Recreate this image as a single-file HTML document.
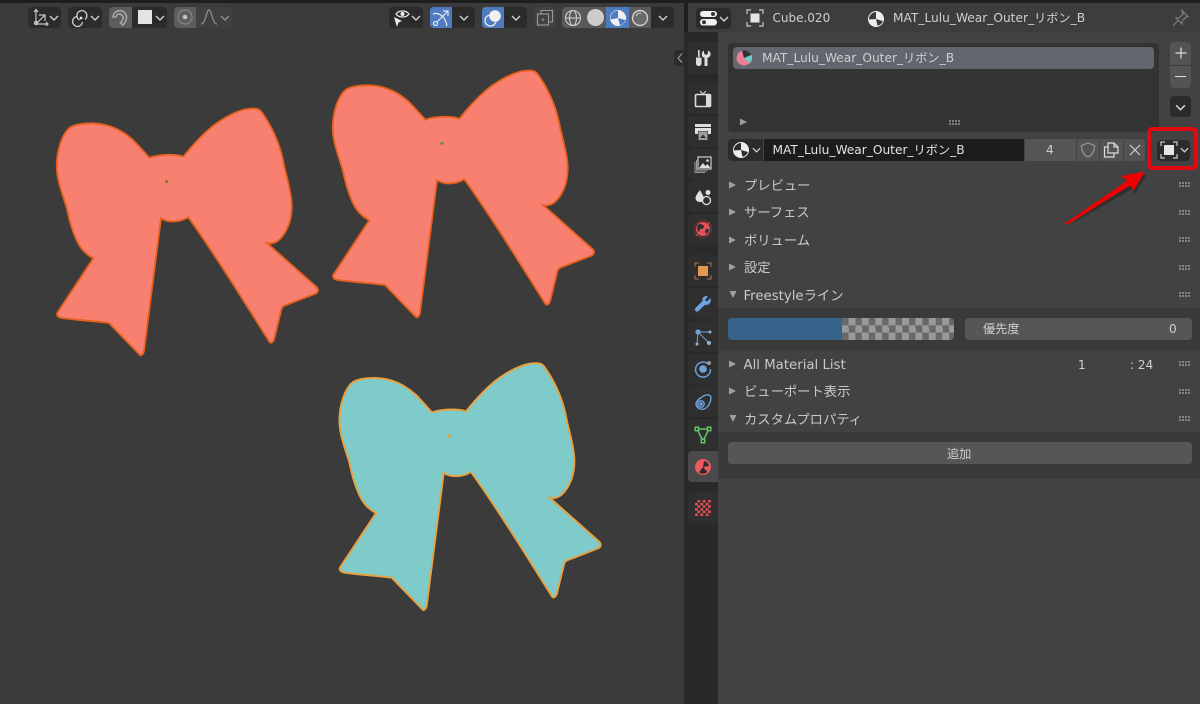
<!DOCTYPE html>
<html lang="ja"><head><meta charset="utf-8"><title>Blender</title>
<style>
html,body{margin:0;padding:0;background:#3b3b3b}
#r{position:relative;width:1200px;height:704px;overflow:hidden;background:#3b3b3b;font-family:"DejaVu Sans","Noto Sans CJK JP",sans-serif;font-size:12.2px;color:#cfcfcf;filter:blur(.35px)}
#r div,#r span,#r svg{position:absolute}
.t{white-space:nowrap;line-height:16px;height:16px}
.h{font-size:13.3px;color:#c9c9c9}
.b{border-radius:4px}
.d{background:#2b2b2b}
.g{width:12px;height:6px;background-image:radial-gradient(circle at 1px 1px,#a5a5a5 .75px,transparent 1px);background-size:3px 3px}
.tab{left:688px;width:30px;background:#2f2f2f;border-radius:4px 0 0 4px}
</style></head><body><div id="r">
<svg width="0" height="0" style="left:0;top:0"><defs>
<symbol id="c" viewBox="0 0 10 6"><path d="M1 1l4 4 4-4" fill="none" stroke="#d0d0d0" stroke-width="1.4"/></symbol>
<path id="bow" d="M149.300 157.700C158 154.500 175 153.500 183.300 156.700C192 146 204 132 217 123C230 114 243 108.500 253 108.500C258 108.500 260 109.500 263 114C270 124 279 141 283 160C285 173 291 188 291.700 205C292 220 287 232 280 239C276 243 271 244 267.300 243.300L316.500 287C318.500 289 318.500 292 316 293.500L286 305C283 306 282 307 281.500 309L274 339.500C273 342.500 270.500 343.500 269.500 342C245 303 212 250 188.300 217.300C184 220 179 221.500 173 221.500C168 221.500 164 220 161 218.300L144 351C143.500 354 141.500 356 140 355L109 323C95 321 75 320 62 318C58 317.500 56 315 57.500 312.500L93.300 258.300C85 254 80 248 76.500 240C71 228 69 218 66.700 208C63 195 56.500 180 56.700 165C57 150 62 134 70 127.500C76 124 84 123.300 92 123.300C108 123.500 122 130 133 140C139 146 144 152 149.300 157.700Z"/>
</defs></svg>

<!-- viewport -->
<div style="left:0;top:0;width:1200px;height:3px;background:#1e1e1e"></div>
<div style="left:684px;top:0;width:4px;height:704px;background:#1f1f1f"></div>

<svg width="684" height="704" viewBox="0 0 684 704" style="left:0;top:0">
<use href="#bow" fill="#f78070" stroke="#e8601c" stroke-width="1.800"/>
<use href="#bow" transform="translate(276 -38)" fill="#f78070" stroke="#e8601c" stroke-width="1.800"/>
<use href="#bow" transform="translate(282.700 254.700)" fill="#7fcbc9" stroke="#e9a040" stroke-width="1.900"/>
<circle cx="166.500" cy="181.500" r="1.600" fill="#8a7a20"/>
<circle cx="442" cy="143.300" r="1.600" fill="#6f8a40"/>
<circle cx="449" cy="436" r="1.800" fill="#e9a040"/>
</svg>

<!-- viewport toolbar left -->
<div class="b d" style="left:28px;top:7px;width:33px;height:21px"></div>
<svg width="18" height="18" viewBox="0 0 18 18" style="left:31px;top:8px" fill="none" stroke="#c8c8c8" stroke-width="1.200"><path d="M5 16V2M3 4l2-2.500L7 4M5 16h12M15 14l2 2-2 2M5 16L14 7M8 7h6v6"/><circle cx="5" cy="15" r="1.600"/></svg>
<svg width="10" height="6" style="left:49px;top:15px"><use href="#c"/></svg>
<div class="b d" style="left:68px;top:7px;width:34px;height:21px"></div>
<svg width="20" height="20" viewBox="0 0 20 20" style="left:71px;top:8px" fill="none" stroke="#cfcfcf" stroke-width="1.300"><path d="M6 8.500a5 5 0 1 0 5.500 5.500"/><path d="M8.500 12a5 5 0 1 1 5.500-.5"/><circle cx="10" cy="10" r="1.400" fill="#eee" stroke="none"/></svg>
<svg width="10" height="6" style="left:90px;top:15px"><use href="#c"/></svg>
<div style="left:109px;top:7px;width:23px;height:21px;background:#5d5d5d;border-radius:4px 0 0 4px"></div>
<svg width="20" height="20" viewBox="0 0 20 20" style="left:110px;top:8px" fill="none" stroke="#a8a8a8" stroke-width="1.600"><path d="M3 9C3 3 11 .5 15 5C18 9 16 14 13 17L10.500 15C13 12 14 9 12 7C10 5 6.500 6 6 9Z"/></svg>
<div class="d" style="left:132px;top:7px;width:35px;height:21px;border-radius:0 4px 4px 0"></div>
<div style="left:138px;top:10px;width:14px;height:14px;background:#e4e4e4"></div>
<svg width="10" height="6" style="left:155px;top:15px"><use href="#c"/></svg>
<div style="left:174px;top:7px;width:22px;height:21px;background:#5d5d5d;border-radius:4px 0 0 4px"></div>
<svg width="18" height="18" viewBox="0 0 18 18" style="left:176px;top:8px"><circle cx="9" cy="9" r="7" fill="none" stroke="#858585" stroke-width="1.200"/><circle cx="9" cy="9" r="2.300" fill="#c4c4c4"/></svg>
<div style="left:196px;top:7px;width:36px;height:21px;background:#404040;border-radius:0 4px 4px 0"></div>
<svg width="18" height="18" viewBox="0 0 18 18" style="left:200px;top:8px" fill="none" stroke="#8f8f8f" stroke-width="1.200"><path d="M1 16C6 16 6 2 9 2s3 14 8 14"/></svg>
<svg width="10" height="6" style="left:220px;top:15px"><use href="#c" opacity=".55"/></svg>

<!-- viewport toolbar right -->
<div class="b d" style="left:389px;top:7px;width:34px;height:21px"></div>
<svg width="20" height="20" viewBox="0 0 20 20" style="left:392px;top:8px"><path d="M4 6C7 2 14 2 17 6C14 10 7 10 4 6Z" fill="none" stroke="#eee" stroke-width="1.200"/><circle cx="10.500" cy="6" r="2" fill="#eee"/><path d="M2 9l8 4-3.500 1.500L5 19Z" fill="#eee"/></svg>
<svg width="10" height="6" style="left:411px;top:15px"><use href="#c"/></svg>
<div style="left:430px;top:7px;width:22px;height:21px;background:#4f7cc0;border-radius:4px 0 0 4px"></div>
<svg width="20" height="20" viewBox="0 0 20 20" style="left:431px;top:8px" fill="none" stroke="#e8e8e8" stroke-width="1.200"><circle cx="4.500" cy="15.500" r="2"/><path d="M6 14L17 3M12 3h5v5M2 6c6-2 12 2 14 12"/></svg>
<div class="d" style="left:452px;top:7px;width:23px;height:21px;border-radius:0 4px 4px 0"></div>
<svg width="10" height="6" style="left:459px;top:15px"><use href="#c"/></svg>
<div style="left:482px;top:7px;width:22px;height:21px;background:#4f7cc0;border-radius:4px 0 0 4px"></div>
<svg width="20" height="20" viewBox="0 0 20 20" style="left:483px;top:8px"><circle cx="7.500" cy="12.500" r="5.500" fill="none" stroke="#e8e8e8" stroke-width="1.300"/><circle cx="12" cy="8" r="5.800" fill="#f0f0f0"/></svg>
<div class="d" style="left:504px;top:7px;width:23px;height:21px;border-radius:0 4px 4px 0"></div>
<svg width="10" height="6" style="left:511px;top:15px"><use href="#c"/></svg>
<div class="b" style="left:535px;top:7px;width:21px;height:21px;background:#414141"></div>
<svg width="18" height="18" viewBox="0 0 18 18" style="left:536px;top:9px" fill="none" stroke="#9a9a9a" stroke-width="1.100"><rect x="1.500" y="5" width="11" height="11"/><path d="M5 5V1.500h11.500V13H12.500"/><path d="M7 9v3M5.500 11h3" stroke-width=".8"/></svg>
<div style="left:562px;top:7px;width:22px;height:21px;background:#5a5a5a;border-radius:4px 0 0 4px"></div>
<svg width="18" height="18" viewBox="0 0 18 18" style="left:564px;top:9px" fill="none" stroke="#cfcfcf" stroke-width="1.100"><circle cx="9" cy="9" r="7.500"/><ellipse cx="9" cy="9" rx="3.500" ry="7.500"/><path d="M1.500 9h15"/></svg>
<div style="left:584px;top:7px;width:22px;height:21px;background:#5a5a5a"></div>
<div style="left:587px;top:9px;width:17px;height:17px;border-radius:50%;background:#cdcdcd"></div>
<div style="left:606px;top:7px;width:23px;height:21px;background:#4f7cc0"></div>
<svg width="18" height="18" viewBox="0 0 18 18" style="left:609px;top:9px"><circle cx="9" cy="9" r="8" fill="#f0f0f0"/><path d="M9 1.500A7.500 7.500 0 0 0 1.700 10.500L9 9Z" fill="#4f7cc0"/><path d="M9 9L16.300 11A7.500 7.500 0 0 1 11 16.300Z" fill="#4f7cc0"/></svg>
<div style="left:629px;top:7px;width:22px;height:21px;background:#5a5a5a"></div>
<svg width="18" height="18" viewBox="0 0 18 18" style="left:631px;top:9px"><circle cx="9" cy="9" r="7.500" fill="#6a6a6a" stroke="#d0d0d0" stroke-width="1.400"/><path d="M5 7c1-2 3-3 5-3" fill="none" stroke="#d0d0d0"/></svg>
<div class="d" style="left:651px;top:7px;width:23px;height:21px;border-radius:0 4px 4px 0"></div>
<svg width="10" height="6" style="left:658px;top:15px"><use href="#c"/></svg>

<div style="left:674px;top:50px;width:10px;height:16px;background:#2c2c2c;border-radius:3px 0 0 3px"></div>
<svg width="6" height="10" viewBox="0 0 6 10" style="left:677px;top:53px" fill="none" stroke="#a8a8a8" stroke-width="1"><path d="M5 .5L1 5l4 4.500"/></svg>

<!-- properties editor -->
<div style="left:688px;top:3px;width:512px;height:701px;background:#424242"></div>
<div style="left:688px;top:3px;width:512px;height:29px;background:#3d3d3d"></div>
<div style="left:684px;top:32px;width:34px;height:672px;background:#292929"></div>

<!-- header -->
<div class="b d" style="left:696px;top:8px;width:35px;height:21px"></div>
<svg width="20" height="16" viewBox="0 0 20 16" style="left:699px;top:10px"><rect x="1" y="1" width="17" height="6" rx="3" fill="#f0f0f0"/><circle cx="14" cy="4" r="2" fill="#333"/><rect x="1" y="9" width="17" height="6.500" rx="3.200" fill="#f0f0f0"/><circle cx="5" cy="12.200" r="2" fill="#333"/></svg>
<svg width="10" height="6" style="left:719px;top:16px"><use href="#c"/></svg>
<svg width="18" height="18" viewBox="0 0 18 18" style="left:746px;top:9px" fill="none" stroke="#c8c8c8" stroke-width="1.200"><path d="M1 5V1h4M13 1h4v4M17 13v4h-4M5 17H1v-4"/><rect x="4.500" y="4.500" width="9" height="9" fill="#e6e6e6" stroke="none"/></svg>
<span class="t" style="left:772.500px;top:10px;font-size:12px">Cube.020</span>
<svg width="18" height="18" viewBox="0 0 18 18" style="left:867px;top:9.500px"><circle cx="9" cy="9" r="8" fill="#eee"/><path d="M9 2A7 7 0 0 0 2 9.500L9 9Z" fill="#3d3d3d"/><path d="M9 9L15.800 11A7 7 0 0 1 10.500 15.800Z" fill="#3d3d3d"/></svg>
<span class="t" style="left:893px;top:10px">MAT_Lulu_Wear_Outer_リボン_B</span>
<svg width="18" height="18" viewBox="0 0 18 18" style="left:1171.500px;top:9px" fill="none" stroke="#7a7a7a" stroke-width="1.300"><path d="M10 1.500l6 6-2 .5-3.500 3.500-.5 3.500-6-6 3.500-.5L11 5ZM6 11.500L1 17"/></svg>

<!-- tabs -->
<div class="tab" style="top:42px;height:32px"></div>
<div class="tab" style="top:83px;height:31px"></div>
<div class="tab" style="top:116px;height:31px"></div>
<div class="tab" style="top:149px;height:31px"></div>
<div class="tab" style="top:181px;height:31px"></div>
<div class="tab" style="top:214px;height:31px"></div>
<div class="tab" style="top:255px;height:31px"></div>
<div class="tab" style="top:288px;height:31px"></div>
<div class="tab" style="top:321px;height:31px"></div>
<div class="tab" style="top:354px;height:31px"></div>
<div class="tab" style="top:386px;height:31px"></div>
<div class="tab" style="top:419px;height:31px"></div>
<div class="tab" style="top:451px;height:31px;background:#4a4a4a"></div>
<div class="tab" style="top:492px;height:31px"></div>

<svg width="18" height="18" viewBox="0 0 18 18" style="left:694px;top:49px"><path d="M4 1h1.600v7H4ZM2 8.500h5.500V14c0 2-1 3-2.700 3S2 16 2 14Z" fill="#dcdcdc"/><path d="M10 1.500v3l2 1.500 2-1.500v-3c2 1 3 2.500 2.500 4.500-.3 1.500-1.500 2.500-3 2.800V17h-3V8.800C9 8.500 8 7.500 7.800 6c-.3-2 .5-3.500 2.200-4.500Z" fill="#dcdcdc"/></svg>
<svg width="18" height="18" viewBox="0 0 18 18" style="left:694px;top:90px"><path d="M6 1l3 3 3-3" fill="none" stroke="#ddd"/><rect x="1.500" y="4.500" width="15" height="12" rx="1" fill="none" stroke="#ddd" stroke-width="1.600"/><rect x="12" y="5" width="4" height="11" fill="#ddd"/><rect x="3" y="6" width="8" height="9" fill="#2e2e2e"/></svg>
<svg width="18" height="18" viewBox="0 0 18 18" style="left:694px;top:123px"><rect x="1" y="1" width="16" height="3" fill="#ddd"/><path d="M1 5h16v6h-3V8H4v3H1Z" fill="#ddd"/><rect x="4.500" y="8.500" width="9" height="8.500" fill="#9e9e9e"/><path d="M6 15l3-3.500 3 3.500Z" fill="#333"/></svg>
<svg width="18" height="18" viewBox="0 0 18 18" style="left:694px;top:156px"><rect x="4" y="1" width="13" height="12" fill="none" stroke="#ccc" stroke-width="1.200"/><path d="M5 12l4-5 2.500 3 2-2 3 4Z" fill="#ddd"/><circle cx="13.500" cy="4.500" r="1.300" fill="#ddd"/><path d="M2.500 4v11h11M1 6v10.500h10" fill="none" stroke="#999"/></svg>
<svg width="18" height="18" viewBox="0 0 18 18" style="left:694px;top:188px"><path d="M6 2l4.500 8.500C10 13 8 14 6 14c-2.500 0-4.500-1.500-4.500-4C1.500 8 4 4.500 6 2Z" fill="#e0e0e0"/><circle cx="14" cy="4.500" r="2.500" fill="#e0e0e0"/><circle cx="12.500" cy="12.500" r="4" fill="#2e2e2e" stroke="#e0e0e0" stroke-width="1.300"/></svg>
<svg width="20" height="20" viewBox="0 0 20 20" style="left:693px;top:219px"><circle cx="10" cy="10" r="7" fill="#e2515a"/><path d="M5 6c3-2 5 0 6 1s-1 3-3 3-2 2-1 4c-2-1-4-5-2-8ZM13 10l3 0c0 2-1 4-3 5-1-2-1-3 0-5Z" fill="#2e2e2e"/><path d="M3 17L17 3" stroke="#e2515a" stroke-width="1" fill="none"/><circle cx="10" cy="10" r="8.500" fill="none" stroke="#a33" stroke-width=".6"/></svg>
<svg width="18" height="18" viewBox="0 0 18 18" style="left:694px;top:262px" fill="none" stroke="#a8764a" stroke-width="1"><path d="M1 5V1h4M13 1h4v4M17 13v4h-4M5 17H1v-4"/><rect x="4" y="4" width="10" height="10" fill="#e39a50" stroke="none"/></svg>
<svg width="18" height="18" viewBox="0 0 18 18" style="left:694px;top:295px"><path d="M16.500 3L13 6.500 11 5l3-3.500C11 0 8 2 8.500 6L1.500 13c-1 1-.8 2.200 0 3s2 1 3 0L11 9.800c3.500 1 6.800-2 5.500-6.800Z" fill="#6fa3de"/></svg>
<svg width="18" height="18" viewBox="0 0 18 18" style="left:694px;top:328px" stroke="#7f9ec4" stroke-width="1" fill="#6fa3de"><path d="M4 4l11 11M4 4L3 16M4 4h12"/><circle cx="4" cy="4" r="2.600" stroke="none"/><circle cx="15" cy="15" r="2" stroke="none" fill="#8fb4de"/><circle cx="3" cy="16" r="1.500" stroke="none" fill="#8fb4de"/><circle cx="16" cy="4" r="1.500" stroke="none" fill="#8fb4de"/></svg>
<svg width="18" height="18" viewBox="0 0 18 18" style="left:694px;top:360px"><path d="M14 4A7.500 7.500 0 1 0 16.500 9" fill="none" stroke="#6fa3de" stroke-width="1.400"/><circle cx="9" cy="9" r="3.800" fill="#6fa3de"/><circle cx="15" cy="3" r="2" fill="#9a9a9a"/></svg>
<svg width="18" height="18" viewBox="0 0 18 18" style="left:694px;top:393px" fill="none" stroke="#6fa3de" stroke-width="1.400"><path d="M2 11C2 7 11 1 15 2s1 10-3 13S2 15 2 11Z"/><circle cx="7" cy="11" r="3.200"/><circle cx="7" cy="11" r="1" fill="#6fa3de"/></svg>
<svg width="18" height="18" viewBox="0 0 18 18" style="left:694px;top:426px" fill="none" stroke="#63c46a" stroke-width="1.500"><path d="M3 3h12L9 15Z"/><rect x="1.200" y="1.200" width="3.400" height="3.400" fill="#2e2e2e"/><rect x="13.400" y="1.200" width="3.400" height="3.400" fill="#2e2e2e"/><rect x="7.300" y="13.400" width="3.400" height="3.400" fill="#2e2e2e"/></svg>
<svg width="18" height="18" viewBox="0 0 18 18" style="left:694px;top:458px"><circle cx="9" cy="9" r="8" fill="#ee5a62"/><path d="M9 9L10 3A6 6 0 0 1 15 8Z" fill="#2b2b2b"/><path d="M9 9L5 14.500A7 7 0 0 0 13.500 14Z" fill="#2b2b2b"/></svg>
<div style="left:695px;top:500px;width:16px;height:16px;background:conic-gradient(#e2515a 25%,#2a2a2a 0 50%,#e2515a 0 75%,#2a2a2a 0) 0 0/5.300px 5.300px"></div>

<!-- material list -->
<div class="b" style="left:728px;top:43px;width:431px;height:89px;background:#333"></div>
<div class="b" style="left:733px;top:47px;width:421px;height:22px;background:#62666e"></div>
<svg width="16" height="16" viewBox="0 0 16 16" style="left:736px;top:50px"><circle cx="8" cy="8" r="7.500" fill="#ee7f97"/><path d="M8 8L15.500 5A7.500 7.500 0 0 1 14 13Z" fill="#68d0cc"/><path d="M8 8L15 5A7.500 7.500 0 0 0 6 .7Z" fill="#333"/></svg>
<span class="t" style="left:762px;top:50px">MAT_Lulu_Wear_Outer_リボン_B</span>
<svg width="8" height="8" viewBox="0 0 8 8" style="left:740px;top:118px"><path d="M0 .5L7 4 0 7.500Z" fill="#9c9c9c"/></svg>
<div class="g" style="left:949px;top:120px"></div>
<div class="b" style="left:1170px;top:42px;width:21px;height:46px;background:#545454"></div>
<div style="left:1170px;top:65px;width:21px;height:1px;background:#3c3c3c"></div>
<svg width="12" height="12" viewBox="0 0 12 12" style="left:1175px;top:47px"><path d="M6 .5v11M.5 6h11" stroke="#dcdcdc" stroke-width="1.200"/></svg>
<div style="left:1175px;top:75.500px;width:11px;height:1.300px;background:#dcdcdc"></div>
<div class="b d" style="left:1170px;top:96px;width:21px;height:21px"></div>
<svg width="11" height="7" style="left:1175px;top:104px"><use href="#c"/></svg>

<!-- data block row -->
<div class="d" style="left:728px;top:139px;width:35px;height:22px;border-radius:4px 0 0 4px"></div>
<svg width="18" height="18" viewBox="0 0 18 18" style="left:732px;top:141px"><circle cx="9" cy="9" r="8" fill="#eee"/><path d="M9 2A7 7 0 0 0 2 9.500L9 9Z" fill="#2b2b2b"/><path d="M9 9L15.800 11A7 7 0 0 1 10.500 15.800Z" fill="#2b2b2b"/></svg>
<svg width="9" height="6" style="left:752px;top:147px"><use href="#c"/></svg>
<div style="left:764px;top:139px;width:260px;height:22px;background:#1c1c1c"></div>
<span class="t" style="left:772.500px;top:142px;color:#e2e2e2">MAT_Lulu_Wear_Outer_リボン_B</span>
<div style="left:1025px;top:139px;width:51px;height:22px;background:#555"></div>
<span class="t" style="left:1046px;top:142px">4</span>
<div style="left:1077px;top:139px;width:22px;height:22px;background:#535353"></div>
<svg width="16" height="16" viewBox="0 0 16 16" style="left:1080px;top:142px"><path d="M8 1l6.500 2.500c0 6-2 9.500-6.500 11.500C3.500 13 1.500 9.500 1.500 3.500Z" fill="none" stroke="#9a9a9a" stroke-width="1.200"/></svg>
<div style="left:1100px;top:139px;width:23px;height:22px;background:#535353"></div>
<svg width="16" height="16" viewBox="0 0 16 16" style="left:1103px;top:142px" fill="none" stroke="#dcdcdc" stroke-width="1.200"><path d="M5 11V1h6l4 4v6ZM11 1v4h4M5 5H1.500v10H11v-4"/></svg>
<div style="left:1124px;top:139px;width:21px;height:22px;background:#535353;border-radius:0 4px 4px 0"></div>
<svg width="12" height="12" viewBox="0 0 12 12" style="left:1129px;top:144px"><path d="M1 1l10 10M11 1L1 11" stroke="#cfcfcf" stroke-width="1.200"/></svg>
<div class="b d" style="left:1157px;top:140px;width:33px;height:21px"></div>
<svg width="18" height="18" viewBox="0 0 18 18" style="left:1160px;top:141px" fill="none" stroke="#c8c8c8" stroke-width="1.200"><path d="M1 5V1h4M13 1h4v4M17 13v4h-4M5 17H1v-4"/><rect x="4" y="4" width="10" height="10" fill="#e6e6e6" stroke="none"/></svg>
<svg width="9" height="6" style="left:1180px;top:147px"><use href="#c"/></svg>
<div style="left:1147px;top:127px;width:43px;height:35px;border:4px solid #dd0a10;border-radius:5px"></div>

<!-- panels -->
<svg width="8" height="8" viewBox="0 0 8 8" style="left:729px;top:181px"><path d="M0 .5L7 4 0 7.500Z" fill="#a0a0a0"/></svg>
<span class="t h" style="left:744px;top:178.500px">プレビュー</span>
<div class="g" style="left:1179px;top:182px"></div>
<svg width="8" height="8" viewBox="0 0 8 8" style="left:729px;top:208px"><path d="M0 .5L7 4 0 7.500Z" fill="#a0a0a0"/></svg>
<span class="t h" style="left:744px;top:206px">サーフェス</span>
<div class="g" style="left:1179px;top:210px"></div>
<svg width="8" height="8" viewBox="0 0 8 8" style="left:729px;top:236px"><path d="M0 .5L7 4 0 7.500Z" fill="#a0a0a0"/></svg>
<span class="t h" style="left:744px;top:233.500px">ボリューム</span>
<div class="g" style="left:1179px;top:237px"></div>
<svg width="8" height="8" viewBox="0 0 8 8" style="left:729px;top:263px"><path d="M0 .5L7 4 0 7.500Z" fill="#a0a0a0"/></svg>
<span class="t h" style="left:744px;top:261px">設定</span>
<div class="g" style="left:1179px;top:265px"></div>
<svg width="8" height="8" viewBox="0 0 8 8" style="left:728.500px;top:291px"><path d="M.5 0L7.500 0 4 7Z" fill="#a0a0a0"/></svg>
<span class="t h" style="left:743.500px;top:288.500px">Freestyleライン</span>
<div class="g" style="left:1179px;top:292px"></div>

<div style="left:718px;top:308px;width:482px;height:42px;background:#3a3a3a"></div>
<div style="left:728px;top:318px;width:114px;height:22px;background:#36638a;border-radius:4px 0 0 4px"></div>
<div style="left:842px;top:318px;width:112px;height:22px;background:conic-gradient(#9a9a9a 25%,#686868 0 50%,#9a9a9a 0 75%,#686868 0) 0 0/13.400px 14.600px;border-radius:0 4px 4px 0"></div>
<div class="b" style="left:965px;top:318px;width:227px;height:22px;background:#565656"></div>
<span class="t" style="left:983px;top:321px">優先度</span>
<span class="t" style="left:1169px;top:321px">0</span>

<svg width="8" height="8" viewBox="0 0 8 8" style="left:729px;top:360px"><path d="M0 .5L7 4 0 7.500Z" fill="#a0a0a0"/></svg>
<span class="t h" style="left:743.500px;top:357.500px">All Material List</span>
<span class="t" style="left:1078px;top:357px;font-size:12px">1</span>
<span class="t" style="left:1130px;top:357px;font-size:12px">: 24</span>
<div class="g" style="left:1179px;top:361px"></div>
<svg width="8" height="8" viewBox="0 0 8 8" style="left:729px;top:387px"><path d="M0 .5L7 4 0 7.500Z" fill="#a0a0a0"/></svg>
<span class="t h" style="left:744px;top:385px">ビューポート表示</span>
<div class="g" style="left:1179px;top:389px"></div>
<svg width="8" height="8" viewBox="0 0 8 8" style="left:728.500px;top:415px"><path d="M.5 0L7.500 0 4 7Z" fill="#a0a0a0"/></svg>
<span class="t h" style="left:744px;top:412.500px">カスタムプロパティ</span>
<div class="g" style="left:1179px;top:416px"></div>

<div style="left:718px;top:432px;width:482px;height:47px;background:#3a3a3a"></div>
<div class="b" style="left:728px;top:442px;width:464px;height:22px;background:#565656"></div>
<span class="t" style="left:947px;top:445.500px">追加</span>

<!-- arrow -->
<svg width="100" height="70" viewBox="1060 165 100 70" style="left:1060px;top:165px;overflow:visible">
<path d="M1068 226L1128 184L1124 179L1147 174L1135 194L1132 189Z" fill="#000" opacity=".28"/>
<path d="M1065.500 223L1067 224.800L1130 185.500L1133.500 191L1145 171.500L1121.500 176L1127 181Z" fill="#f00000"/>
</svg>
</div></body></html>
